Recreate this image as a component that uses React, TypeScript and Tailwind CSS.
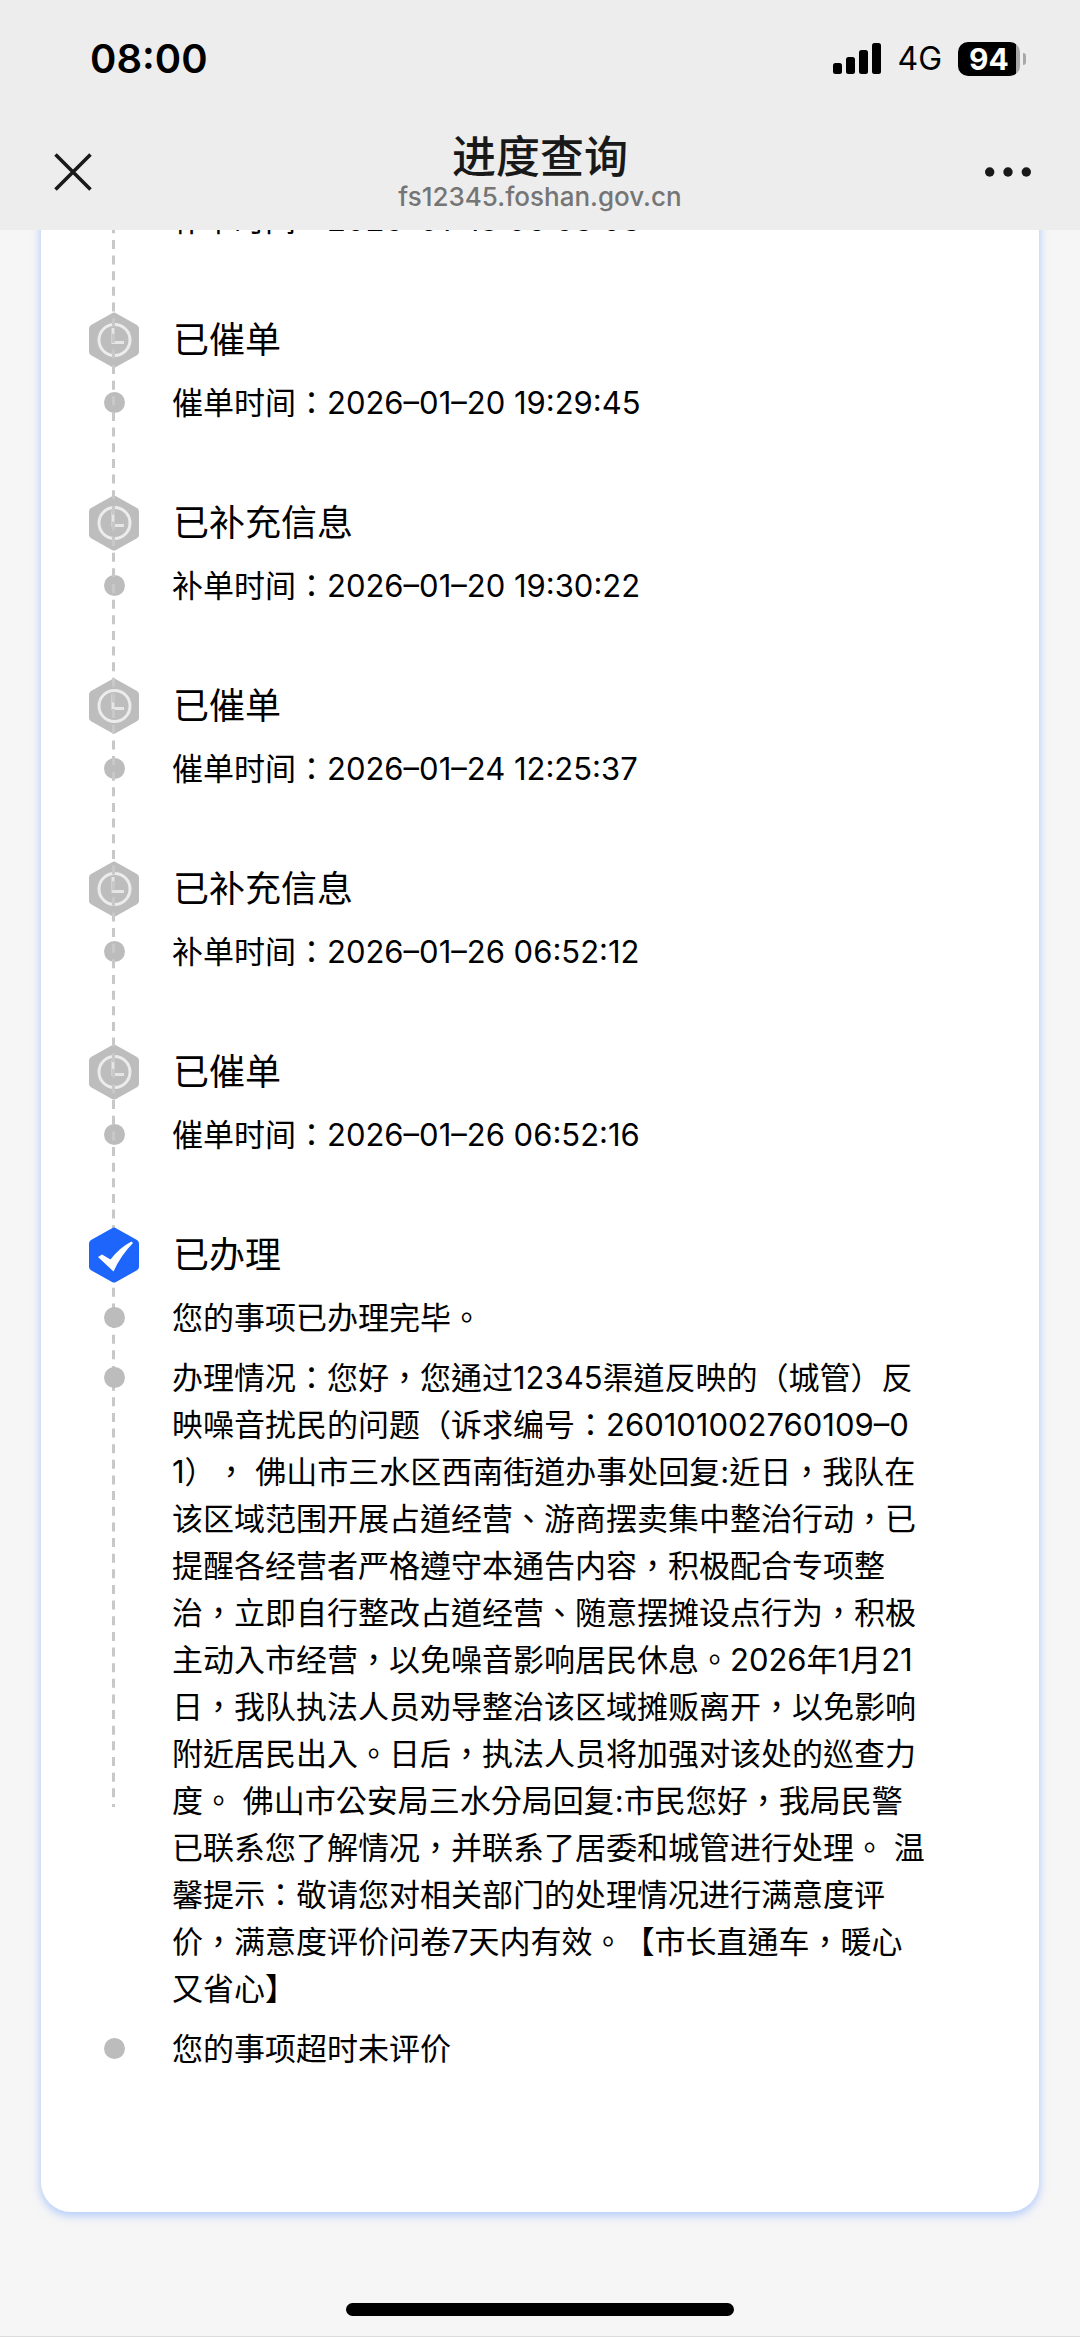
interface TimelineItem {
  title?: string
  details: string[]
  done?: boolean
}

const items: TimelineItem[] = [
  { details: ['补单时间：2026–01–18 06:53:03'] },
  { title: '已催单', details: ['催单时间：2026–01–20 19:29:45'] },
  { title: '已补充信息', details: ['补单时间：2026–01–20 19:30:22'] },
  { title: '已催单', details: ['催单时间：2026–01–24 12:25:37'] },
  { title: '已补充信息', details: ['补单时间：2026–01–26 06:52:12'] },
  { title: '已催单', details: ['催单时间：2026–01–26 06:52:16'] },
  {
    title: '已办理',
    done: true,
    details: [
      '您的事项已办理完毕。',
      '办理情况：您好，您通过12345渠道反映的（城管）反映噪音扰民的问题（诉求编号：260101002760109–01）， 佛山市三水区西南街道办事处回复:近日，我队在该区域范围开展占道经营、游商摆卖集中整治行动，已提醒各经营者严格遵守本通告内容，积极配合专项整治，立即自行整改占道经营、随意摆摊设点行为，积极主动入市经营，以免噪音影响居民休息。2026年1月21日，我队执法人员劝导整治该区域摊贩离开，以免影响附近居民出入。日后，执法人员将加强对该处的巡查力度。 佛山市公安局三水分局回复:市民您好，我局民警已联系您了解情况，并联系了居委和城管进行处理。 温馨提示：敬请您对相关部门的处理情况进行满意度评价，满意度评价问卷7天内有效。【市长直通车，暖心又省心】',
      '您的事项超时未评价',
    ],
  },
]

const HEX = 'M23 1.2Q25 0 27 1.2L48 13Q50 14 50 16.500V40Q50 42 48 43.200L27 55Q25 56.200 23 55L2 43.200Q0 42 0 40V16.500Q0 14 2 13Z'

function ClockBadge() {
  return (
    <svg viewBox="0 0 50 56" className="h-14 w-[50px] shrink-0" aria-hidden>
      <path d={HEX} fill="#bdbdbd" />
      <circle cx="25.500" cy="28" r="15.500" fill="none" stroke="#ececec" strokeWidth="3" />
      <path d="M24 16V30.500H35" fill="none" stroke="#e6e6e6" strokeWidth="3" />
    </svg>
  )
}

function CheckBadge() {
  return (
    <svg viewBox="0 0 50 56" className="h-14 w-[50px] shrink-0" aria-hidden>
      <path d={HEX} fill="#1e66fb" />
      <path d="M9 30L13 27.500L21.500 32.500Q30 21 42.500 14.500L44 16Q32 28 24.500 44.500Z" fill="#fff" />
    </svg>
  )
}

function StatusBar() {
  return (
    <div className="flex h-[114px] items-center justify-between pt-1 pr-[54px] pl-[90px]">
      <span className="text-[40px] leading-none font-semibold">08:00</span>
      <div className="flex items-center gap-4">
        <svg viewBox="0 0 48 32" className="h-8 w-12" aria-hidden>
          <rect x="0" y="20" width="9" height="11" rx="2.500" />
          <rect x="13" y="14" width="9" height="17" rx="2.500" />
          <rect x="26" y="7" width="9" height="24" rx="2.500" />
          <rect x="39" y="0" width="9" height="31" rx="2.500" />
        </svg>
        <span className="text-[32px] leading-none">4G</span>
        <div className="flex items-center gap-[3px]">
          <div className="flex h-[34px] w-[62px] items-center justify-center rounded-[10px] bg-[linear-gradient(to_right,#000_94%,#a8a8a8_94%)] text-[30px] leading-none font-bold text-white">
            94
          </div>
          <div className="h-3 w-[3px] rounded-r-full bg-[#a8a8a8]" />
        </div>
      </div>
    </div>
  )
}

function NavBar() {
  return (
    <div className="flex h-[116px] items-center justify-between pr-[49px] pl-[54px] text-[#191919]">
      <button type="button" aria-label="关闭" className="flex w-20 justify-start">
        <svg viewBox="0 0 38 38" className="size-[38px]" aria-hidden>
          <path d="M1.500 1.500L36.500 36.500M36.500 1.500L1.500 36.500" stroke="currentColor" strokeWidth="3.600" />
        </svg>
      </button>
      <div className="flex flex-col items-center pt-0.5">
        <h1 className="text-[44px] leading-[48px] font-medium">进度查询</h1>
        <p className="text-[26px] leading-8 font-medium text-[#757575]">fs12345.foshan.gov.cn</p>
      </div>
      <button type="button" aria-label="更多" className="flex w-[85px] justify-end">
        <svg viewBox="0 0 46 10" className="h-[10px] w-[46px]" aria-hidden>
          <circle cx="4.700" cy="5" r="4.700" fill="currentColor" />
          <circle cx="23" cy="5" r="4.700" fill="currentColor" />
          <circle cx="41.300" cy="5" r="4.700" fill="currentColor" />
        </svg>
      </button>
    </div>
  )
}

function TimelineEntry({ item }: { item: TimelineItem }) {
  return (
    // the finished step sits above the dashed line, the pending ones below it
    <li className={`flex flex-col gap-[11px] pb-[69px] ${item.done ? 'relative z-20' : ''}`}>
      {item.title && (
        <div className="flex items-center gap-[34px]">
          {item.done ? <CheckBadge /> : <ClockBadge />}
          <h2 className="text-4xl">{item.title}</h2>
        </div>
      )}
      <ul className="flex flex-col gap-[13px]">
        {item.details.map((text) => (
          <li key={text} className="flex gap-8">
            <span className="flex h-[47px] w-[51px] shrink-0 items-center justify-center">
              <span className="size-[21px] rounded-full bg-[#bcbcbc]" />
            </span>
            <p className="text-[31px] leading-[47px] break-all">{text}</p>
          </li>
        ))}
      </ul>
    </li>
  )
}

export default function App() {
  return (
    <div className="flex h-screen flex-col overflow-hidden border-b border-[#dcdcdc] bg-[#f6f6f6] font-[Inter,'Noto_Sans_CJK_TC',sans-serif] text-black [text-spacing-trim:space-all]">
      <header className="shrink-0 bg-[#ededed]">
        <StatusBar />
        <NavBar />
      </header>

      {/* pinned to the newest entry, older ones run out under the header */}
      <main className="flex min-h-0 flex-1 flex-col justify-end overflow-hidden">
        <section className="mx-[41px] rounded-[30px] bg-white pt-12 pr-28 pb-[71px] pl-12 shadow-[0_3px_8px_1px_rgba(120,165,255,0.5)]">
          <div className="relative">
            <svg className="absolute top-0 left-[23px] z-10 h-[calc(100%-334px)] w-[3px]" aria-hidden>
              <line
                x1="1.500"
                y1="0"
                x2="1.500"
                y2="100%"
                stroke="#c8c8c8"
                strokeWidth="3"
                strokeDasharray="9 6.640"
                strokeDashoffset="3"
              />
            </svg>
            <ol>
              {items.map((item, i) => (
                <TimelineEntry key={i} item={item} />
              ))}
            </ol>
          </div>
        </section>
        <div className="flex h-[124px] shrink-0 items-end justify-center pb-5">
          <div className="h-[13px] w-9/25 rounded-full bg-black" />
        </div>
      </main>
    </div>
  )
}
